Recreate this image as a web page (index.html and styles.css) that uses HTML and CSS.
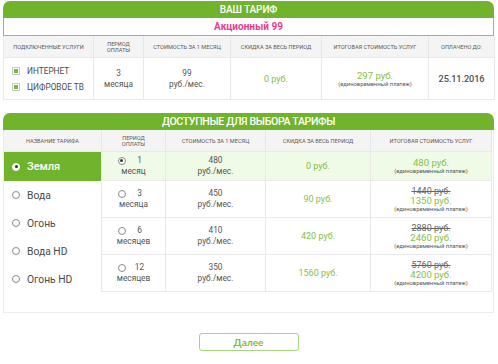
FILE: index.html
```html
<!DOCTYPE html>
<html lang="ru">
<head>
<meta charset="utf-8">
<title>Тариф</title>
<link rel="stylesheet" href="styles.css">
</head>
<body>
<div class="page">
  <section class="panel panel-current">
    <div class="panel-title">ВАШ ТАРИФ</div>
    <div class="tariff-name">Акционный 99</div>
    <div class="cur-grid">
      <div class="th">ПОДКЛЮЧЕННЫЕ УСЛУГИ</div>
      <div class="th">ПЕРИОД<br>ОПЛАТЫ</div>
      <div class="th">СТОИМОСТЬ ЗА 1 МЕСЯЦ</div>
      <div class="th">СКИДКА ЗА ВЕСЬ ПЕРИОД</div>
      <div class="th">ИТОГОВАЯ СТОИМОСТЬ УСЛУГ</div>
      <div class="th">ОПЛАЧЕНО ДО:</div>

      <div class="td services">
        <div class="service"><span class="check"></span>ИНТЕРНЕТ</div>
        <div class="service"><span class="check"></span>ЦИФРОВОЕ ТВ</div>
      </div>
      <div class="td plain">3<br>месяца</div>
      <div class="td plain">99<br>руб./мес.</div>
      <div class="td green">0 руб.</div>
      <div class="td total"><span class="green-big">297 руб.</span><span class="note">(единовременный платеж)</span></div>
      <div class="td date">25.11.2016</div>
    </div>
  </section>

  <section class="panel panel-avail">
    <div class="panel-title title-lg">ДОСТУПНЫЕ ДЛЯ ВЫБОРА ТАРИФЫ</div>
    <div class="avail-box">
      <div class="avail-grid">
        <div class="th th-name">НАЗВАНИЕ ТАРИФА</div>
        <div class="th">ПЕРИОД<br>ОПЛАТЫ</div>
        <div class="th">СТОИМОСТЬ ЗА 1 МЕСЯЦ</div>
        <div class="th">СКИДКА ЗА ВЕСЬ ПЕРИОД</div>
        <div class="th">ИТОГОВАЯ СТОИМОСТЬ УСЛУГ</div>

        <ul class="tariffs">
          <li class="tariff selected"><span class="radio on"></span>Земля</li>
          <li class="tariff"><span class="radio"></span>Вода</li>
          <li class="tariff"><span class="radio"></span>Огонь</li>
          <li class="tariff"><span class="radio"></span>Вода HD</li>
          <li class="tariff"><span class="radio"></span>Огонь HD</li>
        </ul>

        <div class="td period sel"><div class="period-top"><span class="radio on"></span><span class="num">1</span></div>месяц</div>
        <div class="td plain sel">480<br>руб./мес.</div>
        <div class="td green sel">0 руб.</div>
        <div class="td total sel"><span class="green-big">480 руб.</span><span class="note">(единовременный платеж)</span></div>

        <div class="td period"><div class="period-top"><span class="radio"></span><span class="num">3</span></div>месяца</div>
        <div class="td plain">450<br>руб./мес.</div>
        <div class="td green">90 руб.</div>
        <div class="td total"><s class="old">1440 руб.</s><span class="green-big">1350 руб.</span><span class="note">(единовременный платеж)</span></div>

        <div class="td period"><div class="period-top"><span class="radio"></span><span class="num">6</span></div>месяцев</div>
        <div class="td plain">410<br>руб./мес.</div>
        <div class="td green">420 руб.</div>
        <div class="td total"><s class="old">2880 руб.</s><span class="green-big">2460 руб.</span><span class="note">(единовременный платеж)</span></div>

        <div class="td period"><div class="period-top"><span class="radio"></span><span class="num">12</span></div>месяцев</div>
        <div class="td plain">350<br>руб./мес.</div>
        <div class="td green">1560 руб.</div>
        <div class="td total"><s class="old">5760 руб.</s><span class="green-big">4200 руб.</span><span class="note">(единовременный платеж)</span></div>
      </div>
    </div>
  </section>

  <div class="actions">
    <button class="next" type="button">Далее</button>
  </div>
</div>
</body>
</html>
```

FILE: styles.css
```css
* { box-sizing: border-box; }
html, body { margin: 0; padding: 0; background: #fff; }
body {
  font-family: Roboto, "Noto Sans", "Liberation Sans", sans-serif;
  color: #4a4a4a;
}
.page {
  width: 491px;
  margin-left: 3px;
  padding-top: 1px;
}
.panel-title {
  height: 17px;
  background: #6fb42c;
  color: #fff;
  border-radius: 7px 7px 0 0;
  text-align: center;
  font-size: 10px;
  font-weight: 500;
  line-height: 17px;
  letter-spacing: -0.1px;
}
.title-lg {
  font-size: 10.6px;
  letter-spacing: -0.35px;
}
.tariff-name {
  height: 18px;
  border: 1px solid #8cc653;
  border-top: 0;
  text-align: center;
  color: #ea3d8f;
  font-size: 10px;
  font-weight: 700;
  line-height: 17px;
}
.th {
  background: #f4f4f4;
  color: #5a5a5a;
  font-size: 5.6px;
  line-height: 6px;
  text-align: center;
  display: flex;
  align-items: center;
  justify-content: center;
  border-right: 1px solid #e6e6e6;
  border-bottom: 1px solid #e9e9e9;
}
.td {
  border-right: 1px solid #e9e9e9;
  border-bottom: 1px solid #e9e9e9;
  display: flex;
  flex-direction: column;
  align-items: center;
  justify-content: center;
  text-align: center;
}
.cur-grid {
  display: grid;
  grid-template-columns: 90px 50px 87px 91px 107px 66px;
  grid-template-rows: 22px 42px;
  border-left: 1px solid #e9e9e9;
}
.plain {
  font-size: 8.3px;
  line-height: 11px;
  color: #555;
}
.green {
  color: #84bf45;
  font-size: 9px;
}
.green-big {
  color: #84bf45;
  font-size: 9.5px;
  line-height: 10px;
}
.note {
  font-size: 5.8px;
  line-height: 6px;
  color: #555;
}
.old {
  color: #666;
  font-size: 9px;
  line-height: 10px;
}
.date {
  font-size: 9.2px;
  font-weight: 500;
  letter-spacing: -0.1px;
  color: #4f4f4f;
}
.services {
  align-items: flex-start;
  padding-left: 8px;
  gap: 6px;
}
.service {
  display: flex;
  align-items: center;
  font-size: 8.3px;
  color: #4a4a4a;
  line-height: 10px;
}
.check {
  width: 8px;
  height: 8px;
  border: 1px solid #c8c8c8;
  background: #7dbb3a;
  box-shadow: inset 0 0 0 1px #fff;
  margin-right: 7px;
}
.panel-avail { margin-top: 13px; }
.avail-box {
  border: 1px solid #ececec;
  border-top: 0;
  height: 183px;
}
.avail-grid {
  display: grid;
  grid-template-columns: 99px 64px 100px 105px 121px;
  grid-template-rows: 22px 29px 37px 37px 37px;
  margin-left: -1px;
  margin-right: -1px;
}
.th-name { border-left: 1px solid #ececec; }
.tariffs {
  list-style: none;
  margin: 0;
  padding: 0;
  grid-row: 2 / 6;
  grid-column: 1;
  border-left: 1px solid #ececec;
  border-right: 1px solid #e9e9e9;
}
.tariff {
  height: 28px;
  display: flex;
  align-items: center;
  padding-left: 8px;
  font-size: 10.3px;
  color: #4a4a4a;
}
.tariff.selected {
  height: 29px;
  background: #6fb42c;
  color: #fff;
  font-weight: 500;
  font-size: 11px;
}
.radio {
  width: 8px;
  height: 8px;
  border-radius: 50%;
  border: 1px solid #8a8a8a;
  background: #fff;
  margin-right: 7px;
  flex: none;
  position: relative;
}
.radio.on::after {
  content: "";
  position: absolute;
  left: 1.5px;
  top: 1.5px;
  width: 3px;
  height: 3px;
  border-radius: 50%;
  background: #333;
}
.tariff.selected .radio { border-color: #fff; }
.sel { background: #f0fbe7; }
.period {
  font-size: 8.3px;
  color: #555;
  line-height: 11px;
}
.period-top {
  display: flex;
  align-items: center;
  width: 32px;
  justify-content: space-between;
}
.period-top .radio { margin-right: 0; }
.period-top .num { flex: 1; text-align: center; padding-left: 4px; }
.actions {
  display: flex;
  justify-content: center;
  padding-top: 20px;
}
.next {
  width: 100px;
  height: 18px;
  border: 1px solid #a6d57c;
  border-radius: 3px;
  background: #fff;
  color: #7cbf3a;
  font-family: Lato, Roboto, sans-serif;
  font-weight: 700;
  font-size: 10px;
  padding: 0;
}
```
